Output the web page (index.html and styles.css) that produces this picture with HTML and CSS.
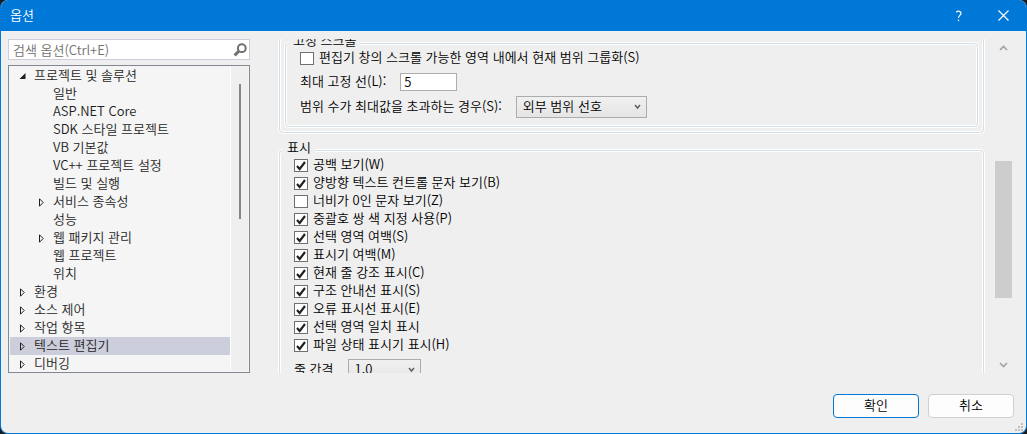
FILE: index.html
```html
<!DOCTYPE html>
<html lang="ko">
<head>
    <meta charset="UTF-8">
    <meta name="viewport" content="width=device-width, initial-scale=1.0">
    <title>옵션</title>
    <link rel="stylesheet" href="styles.css">
</head>
<body>
    <div class="window">
        <header class="titlebar">
            <h1>옵션</h1>
            <button type="button" class="title-btn" aria-label="도움말">
                <svg width="8" height="12" viewBox="0 0 8 12"><path d="M1.2 2.2C3 .6 6 1 6 3.3 6 5.4 3.5 5.5 3.5 8" /><path d="M3.5 9.6v1.6" /></svg>
            </button>
            <button type="button" class="title-btn" aria-label="닫기">
                <svg width="11" height="11" viewBox="0 0 11 11"><path d="M.5.5l10 10M10.5.5l-10 10" /></svg>
            </button>
        </header>

        <main class="content">
            <!-- Search and category tree -->
            <aside class="sidebar">
                <div class="search">
                    <input type="text" placeholder="검색 옵션(Ctrl+E)" aria-label="검색 옵션">
                    <svg width="14" height="14" viewBox="0 0 14 14"><circle cx="8.8" cy="5.2" r="3.9" /><path class="handle" d="M6 8L1.6 12.4" /></svg>
                </div>
                <div class="tree">
                    <ul class="tree-list">
                        <li><svg class="arrow open" viewBox="0 0 7 9"><path d="M6.5 1v6H.5z" /></svg>프로젝트 및 솔루션</li>
                        <li class="child">일반</li>
                        <li class="child">ASP.NET Core</li>
                        <li class="child">SDK 스타일 프로젝트</li>
                        <li class="child">VB 기본값</li>
                        <li class="child">VC++ 프로젝트 설정</li>
                        <li class="child">빌드 및 실행</li>
                        <li class="child"><svg class="arrow" viewBox="0 0 7 9"><path d="M1.5.8v7.4L5.2 4.5z" /></svg>서비스 종속성</li>
                        <li class="child">성능</li>
                        <li class="child"><svg class="arrow" viewBox="0 0 7 9"><path d="M1.5.8v7.4L5.2 4.5z" /></svg>웹 패키지 관리</li>
                        <li class="child">웹 프로젝트</li>
                        <li class="child">위치</li>
                        <li><svg class="arrow" viewBox="0 0 7 9"><path d="M1.5.8v7.4L5.2 4.5z" /></svg>환경</li>
                        <li><svg class="arrow" viewBox="0 0 7 9"><path d="M1.5.8v7.4L5.2 4.5z" /></svg>소스 제어</li>
                        <li><svg class="arrow" viewBox="0 0 7 9"><path d="M1.5.8v7.4L5.2 4.5z" /></svg>작업 항목</li>
                        <li class="selected"><svg class="arrow" viewBox="0 0 7 9"><path d="M1.5.8v7.4L5.2 4.5z" /></svg>텍스트 편집기</li>
                        <li><svg class="arrow" viewBox="0 0 7 9"><path d="M1.5.8v7.4L5.2 4.5z" /></svg>디버깅</li>
                    </ul>
                    <div class="tree-scroll"><div class="tree-thumb"></div></div>
                </div>
            </aside>

            <!-- Option page, scrolled part of the way down -->
            <section class="page">
                <div class="page-inner">
                    <div class="group outer">
                        <fieldset class="group inner">
                            <legend>고정 스크롤</legend>
                            <label class="check"><input type="checkbox">편집기 창의 스크롤 가능한 영역 내에서 현재 범위 그룹화(S)</label>
                            <div class="field">
                                <label for="max-lines">최대 고정 선(L):</label>
                                <input type="text" id="max-lines" value="5">
                            </div>
                            <div class="field">
                                <label for="overflow">범위 수가 최대값을 초과하는 경우(S):</label>
                                <select id="overflow">
                                    <option>외부 범위 선호</option>
                                    <option>내부 범위 선호</option>
                                </select>
                            </div>
                        </fieldset>
                    </div>

                    <fieldset class="group display">
                        <legend>표시</legend>
                        <label class="check"><input type="checkbox" checked>공백 보기(W)</label>
                        <label class="check"><input type="checkbox" checked>양방향 텍스트 컨트롤 문자 보기(B)</label>
                        <label class="check"><input type="checkbox">너비가 0인 문자 보기(Z)</label>
                        <label class="check"><input type="checkbox" checked>중괄호 쌍 색 지정 사용(P)</label>
                        <label class="check"><input type="checkbox" checked>선택 영역 여백(S)</label>
                        <label class="check"><input type="checkbox" checked>표시기 여백(M)</label>
                        <label class="check"><input type="checkbox" checked>현재 줄 강조 표시(C)</label>
                        <label class="check"><input type="checkbox" checked>구조 안내선 표시(S)</label>
                        <label class="check"><input type="checkbox" checked>오류 표시선 표시(E)</label>
                        <label class="check"><input type="checkbox" checked>선택 영역 일치 표시</label>
                        <label class="check"><input type="checkbox" checked>파일 상태 표시기 표시(H)</label>
                        <div class="field">
                            <label for="line-spacing">줄 간격</label>
                            <select id="line-spacing" class="narrow">
                                <option>1.0</option>
                                <option>1.5</option>
                            </select>
                        </div>
                    </fieldset>
                </div>
            </section>

            <div class="scrollbar">
                <svg width="9" height="6" viewBox="0 0 9 6"><path d="M1 5l3.5-3.5L8 5" /></svg>
                <div class="track"><div class="thumb"></div></div>
                <svg width="9" height="6" viewBox="0 0 9 6"><path d="M1 1l3.5 3.5L8 1" /></svg>
            </div>
        </main>

        <footer class="actions">
            <button type="button" class="btn primary">확인</button>
            <button type="button" class="btn">취소</button>
        </footer>

        <svg class="grip" width="8" height="8" viewBox="0 0 8 8"><path d="M6 0h2v2H6zM3 3h2v2H3zM6 3h2v2H6zM0 6h2v2H0zM3 6h2v2H3zM6 6h2v2H6z" /></svg>
    </div>
</body>
</html>
```
FILE: styles.css
```css
* {
    margin: 0;
    padding: 0;
    box-sizing: border-box;
}

body {
    background-color: #1b1b1b;
    color: #000;
    font-family: "Noto Sans CJK KR", sans-serif;
    font-size: 13px;
    font-weight: 350;
    line-height: 18px;
}

button,
input,
select {
    font: inherit;
    color: inherit;
}

.window {
    position: relative;
    display: flex;
    flex-direction: column;
    height: 100vh;
    background-color: #efefef;
    border: 1px solid #0078d7;
    border-top: none;
    border-radius: 8px;
    overflow: hidden;
}

/* Title bar */
.titlebar {
    display: flex;
    align-items: center;
    height: 31px;
    padding-left: 9px;
    background-color: #0078d7;
    color: #fff;
}

.titlebar h1 {
    flex: 1;
    padding-bottom: 2px;
    font-size: 13px;
    font-weight: inherit;
}

.title-btn {
    display: flex;
    align-items: center;
    justify-content: center;
    width: 45px;
    height: 31px;
    border: none;
    background: none;
}

.title-btn svg {
    fill: none;
    stroke: #fff;
    stroke-width: 1.2;
}

/* Main area */
.content {
    flex: 1;
    display: flex;
    min-height: 0;
    padding: 8px 13px 0 7px;
}

.sidebar {
    display: flex;
    flex-direction: column;
    gap: 5px;
    width: 242px;
    margin-right: 28px;
}

.search {
    display: flex;
    align-items: center;
    height: 21px;
    padding-right: 2px;
    background-color: #fff;
    border: 1px solid #cccedb;
}

.search input {
    flex: 1;
    min-width: 0;
    height: 19px;
    padding: 0 0 1px 4px;
    border: none;
    outline: none;
    background: none;
}

.search input::placeholder {
    color: #717171;
}

.search svg {
    fill: none;
    stroke: #717171;
    stroke-width: 2;
}

.search .handle {
    stroke-width: 3;
}

/* Category tree */
.tree {
    flex: 1;
    display: flex;
    min-height: 0;
    padding: 1px;
    background-color: #f5f5f5;
    border: 1px solid #828790;
    color: #1e1e1e;
}

.tree-list {
    flex: 1;
    overflow: hidden;
    list-style: none;
}

.tree-list li {
    display: flex;
    align-items: center;
    height: 18px;
    padding: 0 0 2px 24px;
}

.tree-list .child {
    padding-left: 43px;
}

.tree-list .selected {
    background-color: #cccedb;
}

.arrow {
    flex-shrink: 0;
    width: 7px;
    height: 9px;
    margin: 3px 8px 0 -15px;
    fill: none;
    stroke: #1e1e1e;
}

.arrow.open {
    fill: #1e1e1e;
    stroke: none;
}

.tree-scroll {
    width: 18px;
    padding: 17px 7px 0 8px;
    background-color: #efefef;
    border-left: 1px solid #fff;
}

.tree-thumb {
    width: 2px;
    height: 47%;
    background-color: #868686;
}

/* Option page */
.page {
    flex: 1;
    min-width: 0;
    overflow: hidden;
}

.page-inner {
    margin-top: -13px;
    padding: 0 1px;
}

.group {
    min-width: 0;
    border: 1px solid #d5dfe5;
    border-radius: 4px;
    box-shadow: 0 0 0 1px #fff, inset 0 0 0 1px #fff;
}

.group legend {
    margin: 0 0 -4px -11px;
    padding: 0 4px 7px;
    background-color: #efefef;
    line-height: 12px;
}

.outer {
    padding: 7px 5px 5px;
}

.inner {
    padding: 0 14px 8px;
}

.inner .check {
    margin-bottom: 6px;
}

.display {
    margin-top: 8px;
    padding: 0 14px 12px;
}

.check {
    display: flex;
    align-items: center;
    gap: 5px;
    height: 18px;
    padding-bottom: 2px;
}

.check input {
    appearance: none;
    width: 14px;
    height: 13px;
    margin-top: 3px;
    border: 1px solid #707070;
    background: #fff center / 12px 12px no-repeat;
}

.check input:checked {
    background-image: url("data:image/svg+xml,%3Csvg xmlns='http://www.w3.org/2000/svg' viewBox='0 0 12 12'%3E%3Cpath d='M2 6.2L4.7 9.2 10 2.5' fill='none' stroke='%23212121' stroke-width='2.2'/%3E%3C/svg%3E");
}

.field {
    display: flex;
    align-items: center;
    gap: 14px;
    margin-top: 5px;
}

.field label {
    padding-bottom: 2px;
    line-height: 16px;
}

.field input {
    width: 57px;
    height: 18px;
    padding: 0 3px 1px;
    border: 1px solid #abadb3;
    background-color: #fff;
}

.field select {
    appearance: none;
    width: 131px;
    height: 22px;
    padding: 0 20px 2px 6px;
    border: 1px solid #acacac;
    border-radius: 0;
    background: url("data:image/svg+xml,%3Csvg xmlns='http://www.w3.org/2000/svg' viewBox='0 0 7 6'%3E%3Cpath d='M1 1l2.5 3L6 1' fill='none' stroke='%23606060' stroke-width='1.5'/%3E%3C/svg%3E") right 5px center / 7px 6px no-repeat, linear-gradient(#f0f0f0, #e5e5e5);
}

.field .narrow {
    width: 73px;
}

/* Page scroll bar */
.scrollbar {
    display: flex;
    flex-direction: column;
    align-items: center;
    width: 17px;
    margin-left: 10px;
    margin-right: 1px;
    padding: 6px 0 5px;
}

.scrollbar svg {
    fill: none;
    stroke: #a0a0a0;
    stroke-width: 1.6;
}

.track {
    flex: 1;
    width: 100%;
}

.thumb {
    height: 44%;
    margin-top: 110px;
    background-color: #cdcdcd;
}

/* Dialog buttons */
.actions {
    display: flex;
    justify-content: flex-end;
    gap: 9px;
    padding: 21px 12px 15px;
}

.btn {
    width: 86px;
    height: 24px;
    padding-bottom: 2px;
    background-color: #fdfdfd;
    border: 1px solid #d0d0d0;
    border-radius: 4px;
}

.btn.primary {
    border-color: #0078d7;
}

.grip {
    position: absolute;
    right: 3px;
    bottom: 2px;
    fill: #bfbfbf;
}
```
